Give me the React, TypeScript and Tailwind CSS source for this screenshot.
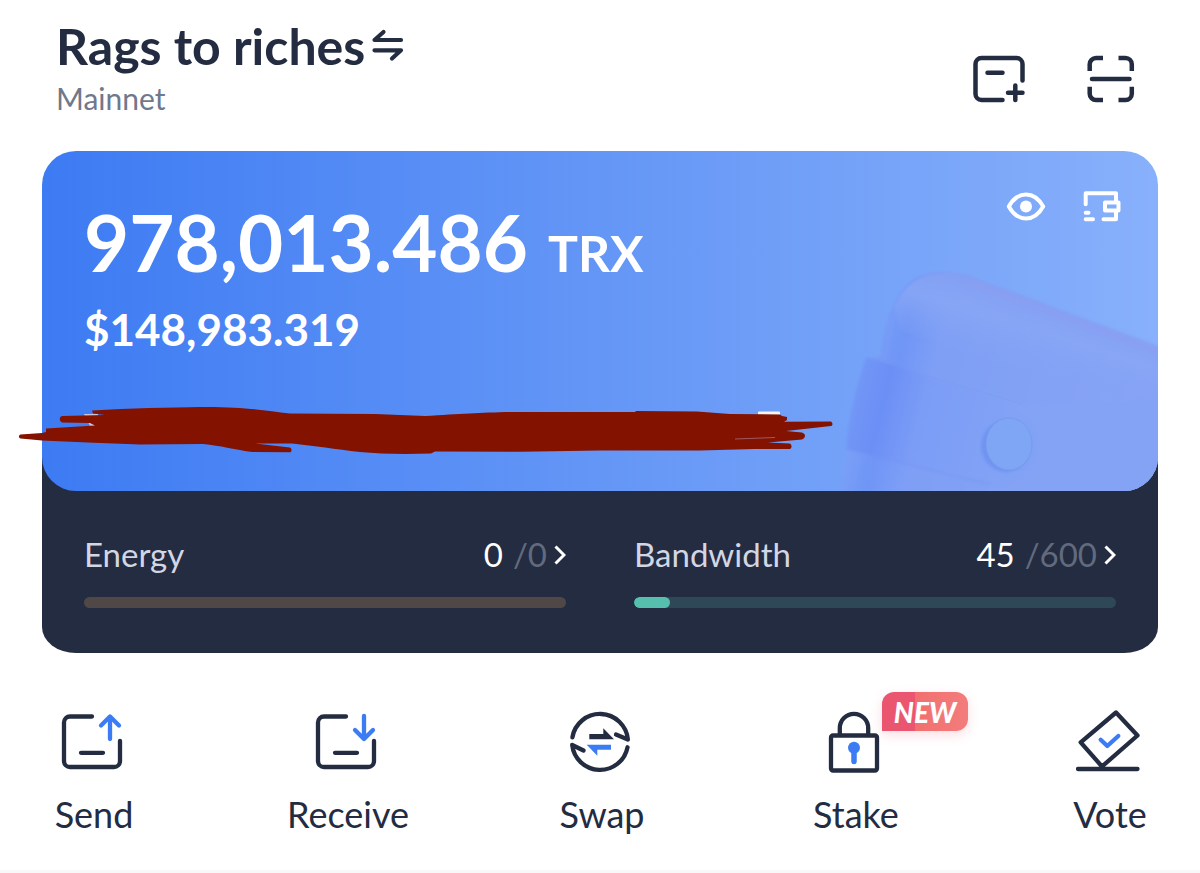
import type { ReactNode } from "react";

interface IResource {
  name: string;
  used: number;
  total: number;
  track: string;
  fill: string;
}

interface IAction {
  label: string;
  icon: ReactNode;
  badge?: string;
}

const resources: IResource[] = [
  { name: "Energy", used: 0, total: 0, track: "bg-[#4f4847]", fill: "bg-[#e8a15c]" },
  { name: "Bandwidth", used: 45, total: 600, track: "bg-[#2f4858]", fill: "bg-[#57bfad]" },
];

function SwitchIcon() {
  return (
    <svg width="34" height="34" viewBox="372 29 34 34" fill="none" stroke="#232c41" strokeWidth="4.200" strokeLinecap="round" strokeLinejoin="round">
      <path d="M402 40H375.500L384.500 32" />
      <path d="M375.500 50.300H402L393 58.500" />
    </svg>
  );
}

function AddWalletIcon() {
  return (
    <svg width="56" height="52" viewBox="0 0 56 52" fill="none" stroke="#232c41" strokeWidth="4.500" strokeLinecap="round">
      <path d="M50.500 26.500V10a6 6 0 0 0-6-6H9.500a6 6 0 0 0-6 6V40a6 6 0 0 0 6 6H30.500" />
      <path d="M15.500 18.700H30.500M43.300 31.500V46M36 38.700H50.500" />
    </svg>
  );
}

function ScanIcon() {
  return (
    <svg width="50" height="52" viewBox="0 0 50 52" fill="none" stroke="#232c41" strokeWidth="4.500">
      <path d="M17 4H10a6.300 6.300 0 0 0-6.300 6.300V17M32.500 4H39.500a6.300 6.300 0 0 1 6.300 6.300V17M3.700 32.700V39.700A6.300 6.300 0 0 0 10 46H17M45.800 32.700V39.700A6.300 6.300 0 0 1 39.500 46H32.500" />
      <path d="M6 25H43.500" strokeLinecap="round" />
    </svg>
  );
}

function EyeIcon() {
  return (
    <svg width="40" height="32" viewBox="0 0 40 32" fill="none">
      <path
        d="M2.800 16.500C7 9 13 4.500 20 4.500S33 9 37.200 16.500C33 24 27 28.500 20 28.500S7 24 2.800 16.500Z"
        stroke="#fff"
        strokeWidth="4"
        strokeLinejoin="round"
      />
      <circle cx="20" cy="16.500" r="6" fill="#fff" />
    </svg>
  );
}

function WalletIcon() {
  return (
    <svg width="40" height="32" viewBox="0 0 40 32" fill="none" stroke="#fff" strokeWidth="4">
      <path d="M3.700 14.300V3.300H34V12M34 21V29.300H21.500" strokeLinecap="round" strokeLinejoin="round" />
      <rect x="23" y="12.500" width="13.500" height="8" strokeLinejoin="round" />
      <path d="M3.700 22.700H6.500M3.700 29.300H11" strokeLinecap="round" />
    </svg>
  );
}

function WalletArt() {
  return (
    <svg className="absolute bottom-0 right-0" width="338" height="241" viewBox="820 250 338 241" fill="none" aria-hidden="true">
      <defs>
        <linearGradient id="body" x1="870" y1="350" x2="1158" y2="420" gradientUnits="userSpaceOnUse">
          <stop offset="0" stopColor="#7aa0f8" />
          <stop offset="0.100" stopColor="#6f95f6" />
          <stop offset="0.220" stopColor="#7e9ff5" />
          <stop offset="1" stopColor="#88a4f4" />
        </linearGradient>
        <linearGradient id="flap" x1="850" y1="400" x2="1010" y2="440" gradientUnits="userSpaceOnUse">
          <stop offset="0" stopColor="#7297f6" />
          <stop offset="0.200" stopColor="#6b8ff5" />
          <stop offset="0.450" stopColor="#7c9df6" />
          <stop offset="1" stopColor="#82a2f5" />
        </linearGradient>
        <linearGradient id="top" x1="940" y1="266" x2="915" y2="345" gradientUnits="userSpaceOnUse">
          <stop offset="0" stopColor="#829ff3" />
          <stop offset="0.400" stopColor="#88a6f5" stopOpacity="0.900" />
          <stop offset="1" stopColor="#80a1f5" stopOpacity="0" />
        </linearGradient>
        <filter id="soft" x="-20%" y="-20%" width="140%" height="140%">
          <feGaussianBlur stdDeviation="1.500" />
        </filter>
      </defs>
      <path
        d="M838 500L848 440L868 358L880 356C883 330 888 312 898 296C912 274 934 268 966 275L1170 351V500Z"
        fill="url(#body)"
        filter="url(#soft)"
      />
      <path d="M894 306C910 274 934 268 966 275L1170 351V420L900 330Z" fill="url(#top)" filter="url(#soft)" />
      <path d="M966 281L1158 352" stroke="#8f9eee" strokeOpacity="0.350" strokeWidth="8" filter="url(#soft)" />
      <path
        d="M866 357C885 361 905 370 930 377L1010 399C1035 406 1043 424 1039 446C1033 472 1018 489 990 484L846 449C848 420 857 384 866 357Z"
        fill="url(#flap)"
        filter="url(#soft)"
      />
      <path d="M868 357C900 368 950 383 1022 404" stroke="#7b98ee" strokeOpacity="0.350" strokeWidth="1" />
      <path d="M880 458C910 464 950 476 990 484" stroke="#6f92f0" strokeOpacity="0.400" strokeWidth="2" filter="url(#soft)" />
      <path d="M1008 407C1032 414 1041 430 1037 450C1030 476 1012 491 988 486L985 500H1158V400Z" fill="#84a3f5" filter="url(#soft)" />
      <ellipse cx="1006" cy="446" rx="25" ry="26" fill="#6f94f1" filter="url(#soft)" />
      <ellipse cx="1009" cy="444" rx="23" ry="26" fill="#7fa6f4" stroke="#789bee" strokeWidth="1" />
    </svg>
  );
}

// Brush stroke that hides the wallet address
function Redaction() {
  return (
    <svg className="absolute -left-[26px] top-[249px]" width="820" height="60" viewBox="16 400 820 60" aria-hidden="true">
      <rect x="758" y="411.500" width="22" height="4" rx="1" fill="#f4f4f4" />
      <path d="M84 414H98V426H90Z" fill="#cfc0dc" />
      <path
        d="M20.500 434.500L42 433L46 432L46 428.500L95 425.500L90 423L62 422.500C59 421 59 417 62 416L105 415L93 413.500L92 410.500C130 408 170 407.500 200 407C240 406.500 262 410 290 413.500L375 414L425 416C460 414 480 412.500 510 412L635 412L636 411L697 411.500L730 414L780 414.500L782 416L787 417L787 420L784 421.700L831 421.500C833 423 833 425 831 426L786 431L802 432.500C806 434 806 437 802 439.500L768 442.500L790 443.500C792 445 792 448 790 449L755 449L700 450.500L600 450.500L520 451.700L435 451.500L431 453.500C405 454.500 380 454 360 452C335 449 315 446 292 443.500L255 443.500L290 447.500C292 448.500 292 451.500 290 452.300L252 452C232 449 222 446 203 444L140 444.500L88 442.500L42 440.500L20.500 438.500C18.500 438 18.500 435 20.500 434.500Z"
        fill="#831200"
      />
      <path d="M735 439L775 437.500" stroke="#a05a64" strokeWidth="1" />
    </svg>
  );
}

function SendIcon() {
  return (
    <svg width="68" height="68" viewBox="0 0 68 68" fill="none" strokeWidth="4.300" strokeLinecap="round" strokeLinejoin="round">
      <path d="M32 8.500H10a6 6 0 0 0-6 6V53a6 6 0 0 0 6 6H54a6 6 0 0 0 6-6V33M21 44.800H43" stroke="#232c41" />
      <path d="M50 31V9M41 17.500L50 8.500L59 17.500" stroke="#3b7cf5" />
    </svg>
  );
}

function ReceiveIcon() {
  return (
    <svg width="68" height="68" viewBox="0 0 68 68" fill="none" strokeWidth="4.300" strokeLinecap="round" strokeLinejoin="round">
      <path d="M32 8.500H10a6 6 0 0 0-6 6V53a6 6 0 0 0 6 6H54a6 6 0 0 0 6-6V33M21 44.800H43" stroke="#232c41" />
      <path d="M50 8V30M41 22L50 31L59 22" stroke="#3b7cf5" />
    </svg>
  );
}

function SwapIcon() {
  return (
    <svg width="68" height="68" viewBox="0 0 68 68" fill="none">
      <g stroke="#232c41" strokeWidth="4.300" strokeLinecap="round" strokeLinejoin="round">
        <path d="M4.400 29.300A28 28 0 0 1 59.900 31.500L48 26.500" />
        <path d="M59.500 39.300A28 28 0 0 1 4.200 37L15.500 42.500" />
      </g>
      <path d="M21.300 26H35.300V20.300L46 31.300H21.300Z" fill="#232c41" />
      <path d="M18.700 36.700H43V41.700H29.300V47.700Z" fill="#3b7cf5" />
    </svg>
  );
}

function StakeIcon() {
  return (
    <svg width="68" height="68" viewBox="0 0 68 68" fill="none">
      <g stroke="#232c41" strokeWidth="4.300" strokeLinejoin="round">
        <path d="M17.800 27V20a14.200 14.200 0 0 1 28.400 0V27" />
        <rect x="9" y="27.500" width="46" height="35" rx="2" />
      </g>
      <circle cx="32" cy="39.700" r="6" fill="#3b7cf5" />
      <path d="M32 40V53.500" stroke="#3b7cf5" strokeWidth="5.500" strokeLinecap="round" />
    </svg>
  );
}

function VoteIcon() {
  return (
    <svg width="68" height="68" viewBox="0 0 68 68" fill="none" strokeWidth="4.300" strokeLinecap="round" strokeLinejoin="round">
      <path d="M40 4.500L61.500 27.500L26 58.500L4.700 34.300ZM2 61H61.500" stroke="#232c41" />
      <path d="M24.700 31.800L31.300 38L42.300 28" stroke="#3b7cf5" />
    </svg>
  );
}

const actions: IAction[] = [
  { label: "Send", icon: <SendIcon /> },
  { label: "Receive", icon: <ReceiveIcon /> },
  { label: "Swap", icon: <SwapIcon /> },
  { label: "Stake", icon: <StakeIcon />, badge: "NEW" },
  { label: "Vote", icon: <VoteIcon /> },
];

function Resource({ name, used, total, track, fill }: IResource) {
  return (
    <a href="#" className="flex flex-1 flex-col">
      <span className="flex h-10 items-center text-[33px]">
        <span className="flex-1 text-[#d3d6e3]">{name}</span>
        <span className="text-white">{used}</span>
        <span className="ml-[10px] text-[#626a7d]">/{total}</span>
        <svg className="ml-[6px]" width="13" height="22" viewBox="0 0 13 22" fill="none">
          <path d="M2.500 2.500L11 11L2.500 19.500" stroke="#fff" strokeWidth="3" />
        </svg>
      </span>
      <span
        className={`mt-[22px] flex h-[11px] overflow-hidden rounded-full ${track}`}
        role="progressbar"
        aria-label={name}
        aria-valuenow={used}
        aria-valuemax={total}
      >
        {used > 0 && <span className={`rounded-full ${fill}`} style={{ width: `${(used / total) * 100}%` }} />}
      </span>
    </a>
  );
}

export default function App() {
  return (
    <div className="border-b-[3px] border-[#f8f8f8] bg-white font-['Lato',sans-serif] text-[#232c41]">
      <header className="flex items-start justify-between pl-14 pr-16 pt-4">
        <div>
          <button className="flex items-center gap-[6px]">
            <h1 className="text-[50px] font-bold leading-[60px]">Rags to riches</h1>
            <SwitchIcon />
          </button>
          <p className="mt-[3px] text-[30px] leading-[38px] text-[#6f788c]">Mainnet</p>
        </div>
        <div className="flex gap-[58px] pt-[38px]">
          <button aria-label="Add wallet">
            <AddWalletIcon />
          </button>
          <button aria-label="Scan">
            <ScanIcon />
          </button>
        </div>
      </header>

      <main>
        <section className="mx-[42px] mt-[34px] rounded-t-[44px] rounded-b-[34px_26px] bg-[#232c41]">
          <div className="relative">
            <div className="relative flex h-[340px] items-start justify-between overflow-hidden rounded-[34px] bg-linear-to-r from-[#3d7bf3] via-[#6496f6] to-[#88b0fb] pl-[42px] pr-9 pt-[39px] text-white">
              <WalletArt />
              <div className="relative font-bold">
                <p className="flex items-baseline gap-5 leading-[104px]">
                  <span className="text-[78px]">978,013.486</span>
                  <span className="text-[50px]">TRX</span>
                </p>
                <p className="-mt-1 text-[44px] leading-[56px]">$148,983.319</p>
              </div>
              <div className="relative flex gap-9">
                <button aria-label="Hide balance">
                  <EyeIcon />
                </button>
                <button aria-label="Wallet details">
                  <WalletIcon />
                </button>
              </div>
            </div>
            <Redaction />
          </div>
          <div className="flex gap-[68px] px-[42px] pb-[45px] pt-11">
            {resources.map((resource) => (
              <Resource key={resource.name} {...resource} />
            ))}
          </div>
        </section>

        <nav className="flex justify-between pb-8 pl-[34px] pr-[30px] pt-[55px]">
          {actions.map((action) => (
            <button key={action.label} className="relative flex w-[120px] flex-col items-center">
              {action.icon}
              <span className="mt-[14px] text-[36px] leading-[48px]">{action.label}</span>
              {action.badge && (
                <span className="absolute -top-4 left-[86px] flex h-[39px] w-[86px] items-center justify-center rounded-xl rounded-bl-none bg-linear-to-r from-[#ea5670] from-38% via-[#f1706f] via-38% to-[#f37c7c] text-[28px] font-black italic text-white shadow-[0_4px_12px_#ea567033]">
                  {action.badge}
                </span>
              )}
            </button>
          ))}
        </nav>
      </main>
    </div>
  );
}
